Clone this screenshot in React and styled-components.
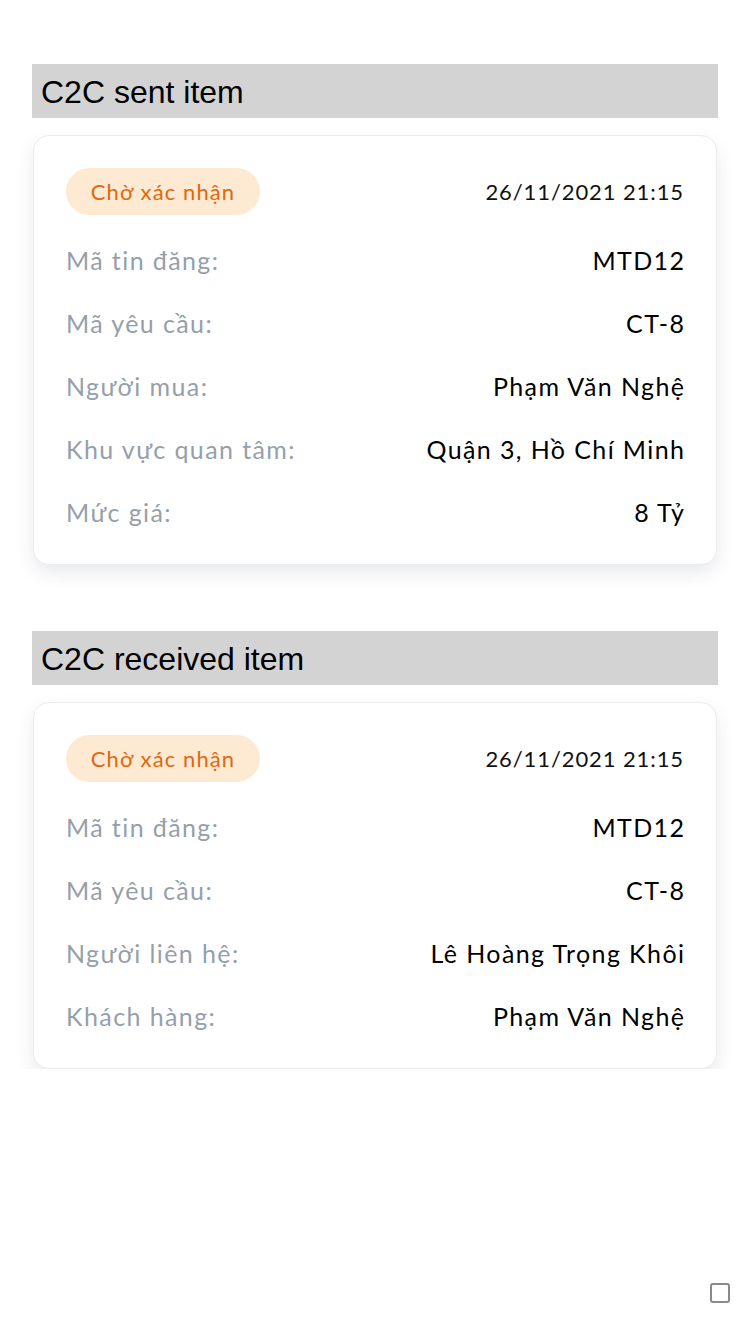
import React from 'react';
import styled, { createGlobalStyle } from 'styled-components';

const GlobalStyle = createGlobalStyle`
  body {
    margin: 0;
    background: #ffffff;
    font-family: 'Lato', 'Noto Sans', sans-serif;
  }
`;

const Page = styled.div`
  padding: 64px 32px 0 32px;
  display: flex;
  flex-direction: column;
  gap: 66px;
`;

const Section = styled.section`
  display: flex;
  flex-direction: column;
  gap: 17px;
`;

const SectionTitle = styled.div`
  background-color: #d3d3d3;
  height: 54px;
  display: flex;
  align-items: center;
  padding: 2px 0 0 9px;
  box-sizing: border-box;
  font-family: 'Liberation Sans', Arial, sans-serif;
  font-size: 32px;
  color: #000;
`;

const Card = styled.div`
  margin: 0 1px;
  border: 1px solid #ececec;
  border-radius: 16px;
  background: #fff;
  box-shadow: 0 8px 18px rgba(40, 50, 80, 0.1);
  padding: 32px 32px 21px 32px;
`;

const TopRow = styled.div`
  display: flex;
  justify-content: space-between;
  align-items: center;
  height: 47px;
  margin-bottom: 13px;
`;

const Badge = styled.span`
  display: inline-flex;
  align-items: center;
  justify-content: center;
  width: 194px;
  height: 47px;
  border-radius: 24px;
  background-color: #fee9d2;
  color: #e0680f;
  font-size: 22px;
  letter-spacing: 1.1px;
`;

const DateText = styled.span`
  font-size: 22px;
  letter-spacing: 0.9px;
  color: #111;
`;

const InfoRow = styled.div`
  display: flex;
  justify-content: space-between;
  align-items: center;
  height: 63px;
  font-size: 25px;
  letter-spacing: 1.4px;
`;

const Label = styled.span`
  color: #959fab;
`;

const Value = styled.span`
  color: #000;
  margin-right: -1.4px;
`;

const CornerBox = styled.div`
  position: fixed;
  right: 20px;
  bottom: 31px;
  width: 16px;
  height: 16px;
  border: 2px solid #8a8a8a;
  border-radius: 3px;
`;

const sections = [
  {
    title: 'C2C sent item',
    rows: [
      ['Mã tin đăng:', 'MTD12'],
      ['Mã yêu cầu:', 'CT-8'],
      ['Người mua:', 'Phạm Văn Nghệ'],
      ['Khu vực quan tâm:', 'Quận 3, Hồ Chí Minh'],
      ['Mức giá:', '8 Tỷ'],
    ],
  },
  {
    title: 'C2C received item',
    rows: [
      ['Mã tin đăng:', 'MTD12'],
      ['Mã yêu cầu:', 'CT-8'],
      ['Người liên hệ:', 'Lê Hoàng Trọng Khôi'],
      ['Khách hàng:', 'Phạm Văn Nghệ'],
    ],
  },
];

const App = () => (
  <>
    <GlobalStyle />
    <Page>
      {sections.map((section, index) => (
        <Section key={index}>
          <SectionTitle>{section.title}</SectionTitle>
          <Card>
            <TopRow>
              <Badge>Chờ xác nhận</Badge>
              <DateText>26/11/2021 21:15</DateText>
            </TopRow>
            {section.rows.map(([label, value], idx) => (
              <InfoRow key={idx}>
                <Label>{label}</Label>
                <Value>{value}</Value>
              </InfoRow>
            ))}
          </Card>
        </Section>
      ))}
    </Page>
    <CornerBox />
  </>
);

export default App;
